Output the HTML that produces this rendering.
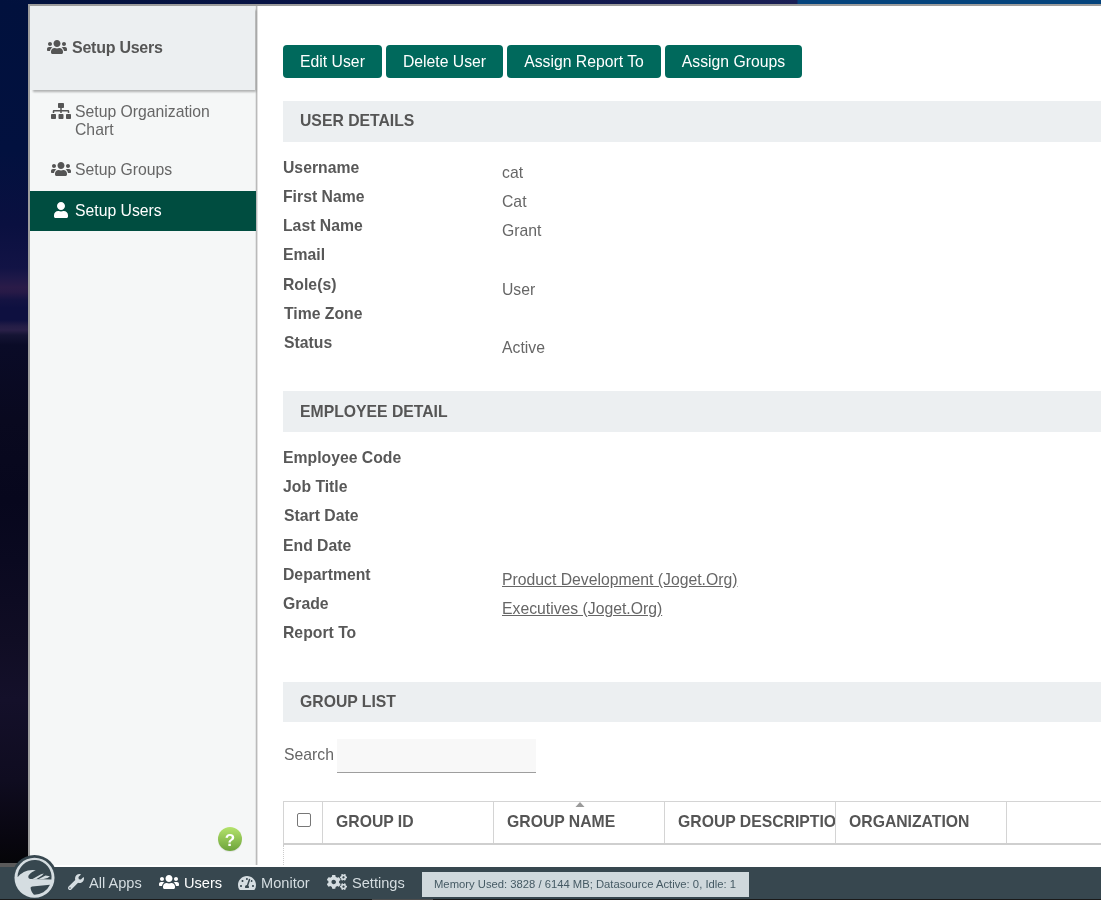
<!DOCTYPE html>
<html><head><meta charset="utf-8">
<style>
*{box-sizing:border-box;margin:0;padding:0}
html,body{width:1101px;height:900px;overflow:hidden}
body{position:relative;font-family:"Liberation Sans",sans-serif;background:#05050c;color:#555}
.abs{position:absolute;white-space:nowrap}
.abs,.btn,.th{will-change:transform}
#bgleft{left:0;top:0;width:28px;height:867px;background:linear-gradient(to bottom,#01113d 0px,#02113f 150px,#0a1040 225px,#121345 268px,#1e1848 278px,#2a1b48 287px,#281a47 292px,#141342 300px,#0e1040 308px,#0e1040 320px,#241d46 326px,#2a2048 330px,#151434 335px,#0a0b27 345px,#09091f 420px,#07071d 500px,#0a0920 560px,#100d24 640px,#14102a 700px,#0f0c20 780px,#08060f 840px,#050508 863px)}
#bggray{left:0;top:863px;width:28px;height:4px;background:#5a5a5a}
#topstrip{left:0;top:0;width:1101px;height:4px;background:linear-gradient(to right,#01113d 0,#0a1448 400px,#1a1f55 797px,#04437c 798px,#04437c 1101px)}
#win{left:28px;top:4px;width:1073px;height:863px;background:#fff;border-left:2px solid #9c9c9c;border-top:2px solid #9c9c9c}
#side{left:30px;top:6px;width:226px;height:859px;background:#f5f7f7}
#sideborder{left:255px;top:6px;width:3px;height:859px;background:linear-gradient(to right,#e4e6e6 1px,#bababa 1px,#bababa 2px,#e2e2e2 2px)}
#sidehead{left:30px;top:6px;width:225px;height:84px;background:#eceff1;box-shadow:2px 3px 2px -1px rgba(0,0,0,.28)}
.sh-title{left:72px;top:38.5px;font-size:16px;letter-spacing:-0.25px;font-weight:bold;color:#555}
.nav{left:75px;font-size:15.75px;color:#666;line-height:18px}
.ico{position:absolute;fill:#555}
.btn{position:absolute;top:45px;height:33px;background:#00695c;color:#fff;border-radius:4px;font-size:15.75px;line-height:33px;text-align:center}
.sechead{left:283px;width:818px;height:41px;background:#eceff1;font-size:15.75px;font-weight:bold;color:#555;padding-left:17px;line-height:41px}
.lbl{left:283px;font-size:15.75px;font-weight:bold;color:#585858;line-height:18px}
.val{left:502px;font-size:15.75px;color:#666;line-height:18px}
.val a{color:#666;text-decoration:underline}
#bar{left:0;top:867px;width:1101px;height:32px;background:#37474f}
#barline{left:0;top:899px;width:1101px;height:1px;background:linear-gradient(to right,#1a1a1a 372px,#4d4d4d 372px,#4d4d4d 433px,#1a1a1a 433px)}
.bi{top:875.5px;font-size:14.6px;color:#d5dde1;line-height:14px}
.bico{position:absolute;fill:#d5dde1}
#mem{left:422px;top:872px;width:327px;height:25px;background:#cfd8dc;color:#455a64;font-size:11.25px;line-height:25px;padding-left:12px}
.th{position:absolute;white-space:nowrap;top:801px;height:44px;border-top:1px solid #d4d4d4;border-right:1px solid #d4d4d4;border-bottom:2px solid #cfcfcf;font-size:15.75px;font-weight:bold;color:#555;line-height:39px;overflow:hidden;padding-left:14px}
</style></head><body>
<div id="bgleft" class="abs"></div>
<div id="bggray" class="abs"></div>
<div id="topstrip" class="abs"></div>
<div id="win" class="abs"></div>
<div id="side" class="abs"></div>
<div id="sideborder" class="abs"></div>
<div id="sidehead" class="abs"></div>
<svg class="ico" style="left:47px;top:39px" width="20" height="16" viewBox="0 0 640 512"><path d="M96 224c35.3 0 64-28.7 64-64s-28.7-64-64-64-64 28.7-64 64 28.7 64 64 64zm448 0c35.3 0 64-28.7 64-64s-28.7-64-64-64-64 28.7-64 64 28.7 64 64 64zm32 32h-64c-17.6 0-33.5 7.1-45.1 18.6 40.3 22.1 68.9 62 75.1 109.4h66c17.7 0 32-14.3 32-32v-32c0-35.3-28.7-64-64-64zm-256 0c61.9 0 112-50.1 112-112S381.9 32 320 32 208 82.1 208 144s50.1 112 112 112zm76.8 32h-8.3c-20.8 10-43.9 16-68.5 16s-47.6-6-68.5-16h-8.3C179.6 288 128 339.6 128 403.2V432c0 26.5 21.5 48 48 48h288c26.5 0 48-21.5 48-48v-28.8c0-63.6-51.6-115.2-115.2-115.2zm-223.7-13.4C161.5 263.1 145.6 256 128 256H64c-35.3 0-64 28.7-64 64v32c0 17.7 14.3 32 32 32h65.9c6.3-47.4 34.9-87.3 75.2-109.4z"/></svg>
<div class="abs sh-title">Setup Users</div>

<svg class="ico" style="left:51px;top:103px" width="20" height="16" viewBox="0 0 640 512"><path d="M128 352H32c-17.67 0-32 14.330-32 32v96c0 17.67 14.33 32 32 32h96c17.67 0 32-14.33 32-32v-96c0-17.67-14.33-32-32-32zm-24-80h192v48h48v-48h192v48h48v-57.59c0-21.17-17.23-38.41-38.41-38.41H344v-64h40c17.67 0 32-14.33 32-32V32c0-17.670-14.33-32-32-32H256c-17.67 0-32 14.33-32 32v96c0 17.67 14.33 32 32 32h40v64H94.41C73.23 224 56 241.23 56 262.41V320h48v-48zm264 80h-96c-17.67 0-32 14.33-32 32v96c0 17.67 14.33 32 32 32h96c17.67 0 32-14.33 32-32v-96c0-17.67-14.33-32-32-32zm240 0h-96c-17.67 0-32 14.33-32 32v96c0 17.67 14.33 32 32 32h96c17.67 0 32-14.33 32-32v-96c0-17.67-14.330-32-32-32z"/></svg>
<div class="abs nav" style="top:103px">Setup Organization<br>Chart</div>
<svg class="ico" style="left:51px;top:161px" width="20" height="16" viewBox="0 0 640 512"><path d="M96 224c35.3 0 64-28.7 64-64s-28.7-64-64-64-64 28.7-64 64 28.7 64 64 64zm448 0c35.3 0 64-28.7 64-64s-28.7-64-64-64-64 28.7-64 64 28.7 64 64 64zm32 32h-64c-17.6 0-33.5 7.1-45.1 18.6 40.3 22.1 68.9 62 75.1 109.4h66c17.7 0 32-14.3 32-32v-32c0-35.3-28.7-64-64-64zm-256 0c61.9 0 112-50.1 112-112S381.9 32 320 32 208 82.1 208 144s50.1 112 112 112zm76.8 32h-8.3c-20.8 10-43.9 16-68.5 16s-47.6-6-68.5-16h-8.3C179.6 288 128 339.6 128 403.2V432c0 26.5 21.5 48 48 48h288c26.5 0 48-21.5 48-48v-28.8c0-63.6-51.6-115.2-115.2-115.2zm-223.7-13.4C161.5 263.1 145.6 256 128 256H64c-35.3 0-64 28.7-64 64v32c0 17.7 14.3 32 32 32h65.9c6.3-47.4 34.9-87.3 75.2-109.4z"/></svg>
<div class="abs nav" style="top:161px">Setup Groups</div>
<div class="abs" style="left:30px;top:191px;width:226px;height:40px;background:#004d40"></div>
<svg class="ico" style="left:54px;top:202px;fill:#fff" width="14" height="16" viewBox="0 0 448 512"><path d="M224 256c70.7 0 128-57.3 128-128S294.7 0 224 0 96 57.3 96 128s57.3 128 128 128zm89.6 32h-16.7c-22.2 10.2-46.9 16-72.9 16s-50.6-5.800-72.9-16h-16.7C60.2 288 0 348.2 0 422.4V464c0 26.5 21.5 48 48 48h352c26.5 0 48-21.5 48-48v-41.6c0-74.2-60.2-134.4-134.4-134.4z"/></svg>
<div class="abs nav" style="top:202px;color:#fff">Setup Users</div>

<div class="abs" style="left:218px;top:827px;width:24px;height:24px;border-radius:50%;background:linear-gradient(to bottom,#b4e36c,#6da33c);box-shadow:0 1px 1px rgba(0,0,0,.08)"></div>
<div class="abs" style="left:218px;top:829px;width:24px;height:24px;text-align:center;font-size:17px;font-weight:bold;color:#fff;line-height:24px">?</div>

<div class="btn" style="left:283px;width:99px">Edit User</div>
<div class="btn" style="left:386px;width:117px">Delete User</div>
<div class="btn" style="left:507px;width:154px">Assign Report To</div>
<div class="btn" style="left:665px;width:137px">Assign Groups</div>

<div class="abs sechead" style="top:101px;line-height:39px">USER DETAILS</div>
<div class="abs lbl" style="top:159px">Username</div>
<div class="abs lbl" style="top:188px">First Name</div>
<div class="abs lbl" style="top:217px">Last Name</div>
<div class="abs lbl" style="top:246px">Email</div>
<div class="abs lbl" style="top:276px">Role(s)</div>
<div class="abs lbl" style="top:305px;left:284px">Time Zone</div>
<div class="abs lbl" style="top:334px;left:284px">Status</div>
<div class="abs val" style="top:164px">cat</div>
<div class="abs val" style="top:193px">Cat</div>
<div class="abs val" style="top:222px">Grant</div>
<div class="abs val" style="top:281px">User</div>
<div class="abs val" style="top:339px">Active</div>

<div class="abs sechead" style="top:391px">EMPLOYEE DETAIL</div>
<div class="abs lbl" style="top:449px">Employee Code</div>
<div class="abs lbl" style="top:478px">Job Title</div>
<div class="abs lbl" style="top:507px;left:284px">Start Date</div>
<div class="abs lbl" style="top:537px">End Date</div>
<div class="abs lbl" style="top:566px">Department</div>
<div class="abs lbl" style="top:595px">Grade</div>
<div class="abs lbl" style="top:624px">Report To</div>
<div class="abs val" style="top:571px"><a>Product Development (Joget.Org)</a></div>
<div class="abs val" style="top:600px"><a>Executives (Joget.Org)</a></div>

<div class="abs sechead" style="top:682px;height:40px;line-height:40px">GROUP LIST</div>
<div class="abs" style="left:284px;top:746px;font-size:15.75px;color:#666;line-height:18px">Search</div>
<div class="abs" style="left:337px;top:739px;width:199px;height:34px;background:#f8f8f8;border-bottom:1px solid #9e9e9e"></div>

<div class="th" style="left:283px;width:40px;border-left:1px solid #d4d4d4"></div>
<div class="abs" style="left:297px;top:813px;width:14px;height:14px;border:1px solid #777;border-radius:2px;background:#fff"></div>
<div class="th" style="left:322px;width:172px">GROUP ID</div>
<div class="th" style="left:493px;width:172px">GROUP NAME</div>
<svg class="abs" style="left:575px;top:802px" width="10" height="6" viewBox="0 0 10 6"><path d="M5 0L9.5 5H0.5Z" fill="#9a9a9a"/></svg>
<div class="th" style="left:664px;width:172px;padding-right:0">GROUP DESCRIPTION</div>
<div class="th" style="left:835px;width:172px">ORGANIZATION</div>
<div class="th" style="left:1006px;width:100px;border-right:none"></div>
<div class="abs" style="left:283px;top:845px;width:1px;height:20px;border-left:1px dotted #ccc"></div>

<div id="bar" class="abs"></div>
<div id="barline" class="abs"></div>
<div class="abs" style="left:12px;top:855px;width:45px;height:44px;border-radius:50%/50% 50% 45% 45%;background:#37474f;overflow:hidden"></div>
<svg class="abs" style="left:14px;top:857px" width="41" height="42" viewBox="0 0 41 42">
<circle cx="20.5" cy="20.8" r="20" fill="#d5dde1"/>
<path d="M3.6 20.2 C7 16 12 13.2 18.5 13 L21.8 13.3 C18.5 14.5 14.8 17 14.3 19.6 C14.1 21.2 15.2 21.9 16.4 21.9 L37.4 22.6 A17 17 0 1 0 3.6 20.2 Z" fill="#37474f"/>
<path d="M16.6 30.6 Q16.8 29.6 18.2 29.4 L36 27.8 A17 17 0 0 1 19.7 37.6 C17.8 35.3 16.4 32.6 16.6 30.6Z" fill="#37474f"/>
<path d="M18.5 22 L27 17.2 L29.8 16.6 L28 18.6 L22.5 22 Z M24.8 22 L31.5 18.6 L36 19.3 L33.5 21 L29.5 22 Z" fill="#d5dde1"/>
</svg>
<svg class="bico" style="left:68px;top:874px" width="16" height="16" viewBox="0 0 512 512"><path d="M507.73 109.1c-2.24-9.03-13.54-12.09-20.12-5.51l-74.36 74.36-67.88-11.31-11.310-67.88 74.36-74.36c6.62-6.62 3.43-17.9-5.66-20.16-47.38-11.74-99.55.91-136.58 37.93-39.64 39.64-50.55 97.1-34.05 147.2L18.74 402.76c-24.99 24.99-24.99 65.51 0 90.5 24.99 24.99 65.51 24.99 90.5 0l213.21-213.21c50.12 16.71 107.47 5.68 147.37-34.22 37.07-37.07 49.7-89.32 37.91-136.73zM64 472c-13.25 0-24-10.75-24-24 0-13.26 10.75-24 24-24s24 10.74 24 24c0 13.25-10.75 24-24 24z"/></svg>
<div class="abs bi" style="left:89px">All Apps</div>
<svg class="bico" style="left:159px;top:874px;fill:#fff" width="20" height="16" viewBox="0 0 640 512"><path d="M96 224c35.3 0 64-28.7 64-64s-28.7-64-64-64-64 28.7-64 64 28.7 64 64 64zm448 0c35.3 0 64-28.7 64-64s-28.7-64-64-64-64 28.7-64 64 28.7 64 64 64zm32 32h-64c-17.6 0-33.5 7.1-45.1 18.6 40.3 22.1 68.9 62 75.1 109.4h66c17.7 0 32-14.3 32-32v-32c0-35.3-28.7-64-64-64zm-256 0c61.9 0 112-50.1 112-112S381.9 32 320 32 208 82.1 208 144s50.1 112 112 112zm76.8 32h-8.3c-20.8 10-43.9 16-68.5 16s-47.6-6-68.5-16h-8.3C179.6 288 128 339.6 128 403.2V432c0 26.5 21.5 48 48 48h288c26.5 0 48-21.5 48-48v-28.8c0-63.6-51.6-115.2-115.2-115.2zm-223.7-13.4C161.5 263.1 145.6 256 128 256H64c-35.3 0-64 28.7-64 64v32c0 17.7 14.3 32 32 32h65.9c6.3-47.4 34.9-87.3 75.2-109.4z"/></svg>
<div class="abs bi" style="left:184px;color:#fff">Users</div>
<svg class="bico" style="left:238px;top:875px" width="18" height="16" viewBox="0 0 576 512"><path d="M288 32C128.94 32 0 160.94 0 320c0 52.8 14.25 102.26 39.06 144.8 5.61 9.62 16.3 15.2 27.44 15.2h443c11.14 0 21.830-5.58 27.44-15.2C561.75 422.26 576 372.8 576 320c0-159.06-128.94-288-288-288zm0 64c14.71 0 26.58 10.13 30.32 23.65-1.11 2.26-2.64 4.23-3.45 6.67l-9.22 27.67c-5.13 3.49-10.97 6.01-17.64 6.01-17.67 0-32-14.33-32-32S270.33 96 288 96zM96 384c-17.67 0-32-14.33-32-32s14.33-32 32-32 32 14.33 32 32-14.33 32-32 32zm48-160c-17.67 0-32-14.33-32-32s14.33-32 32-32 32 14.33 32 32-14.33 32-32 32zm246.77-72.41l-61.33 184C343.13 347.33 352 364.54 352 384c0 11.72-3.38 22.55-8.88 32H232.88c-5.5-9.45-8.88-20.28-8.88-32 0-33.94 26.5-61.43 59.9-63.59l61.34-184.01c4.17-12.56 17.73-19.45 30.36-15.17 12.57 4.19 19.35 17.79 15.17 30.360zm14.66 57.2l15.52-46.55c3.47-1.29 7.13-2.23 11.05-2.23 17.67 0 32 14.33 32 32s-14.33 32-32 32c-11.38 0-20.89-6.27-26.57-15.220zM480 384c-17.67 0-32-14.33-32-32s14.33-32 32-32 32 14.33 32 32-14.33 32-32 32z"/></svg>
<div class="abs bi" style="left:261px">Monitor</div>
<svg class="bico" style="left:327px;top:874px" width="20" height="16" viewBox="0 0 640 512"><path d="M512.1 191l-8.2 14.3c-3 5.3-9.4 7.5-15.1 5.4-11.8-4.4-22.6-10.7-32.1-18.6-4.6-3.8-5.8-10.5-2.8-15.7l8.2-14.3c-6.9-8-12.3-17.3-15.9-27.4h-16.5c-6 0-11.2-4.3-12.2-10.3-2-12-2.1-24.6 0-37.1 1-6 6.2-10.4 12.2-10.4h16.5c3.6-10.1 9-19.4 15.9-27.4l-8.2-14.3c-3-5.2-1.9-11.9 2.8-15.7 9.5-7.9 20.4-14.2 32.1-18.6 5.7-2.1 12.1.1 15.1 5.4l8.2 14.3c10.5-1.9 21.2-1.9 31.7 0L552 6.3c3-5.3 9.4-7.5 15.1-5.4 11.8 4.4 22.6 10.7 32.1 18.6 4.6 3.8 5.8 10.5 2.8 15.7l-8.2 14.3c6.9 8 12.3 17.3 15.9 27.4h16.5c6 0 11.2 4.3 12.2 10.3 2 12 2.1 24.6 0 37.1-1 6-6.2 10.4-12.2 10.4h-16.5c-3.6 10.1-9 19.4-15.9 27.4l8.2 14.3c3 5.2 1.9 11.9-2.8 15.7-9.5 7.9-20.4 14.2-32.1 18.6-5.7 2.1-12.1-.1-15.1-5.4l-8.2-14.3c-10.4 1.9-21.2 1.9-31.7 0zm-10.5-58.8c38.5 29.6 82.4-14.3 52.8-52.8-38.5-29.7-82.4 14.3-52.8 52.8zM386.3 286.1l33.7 16.8c10.1 5.8 14.5 18.1 10.5 29.1-8.9 24.2-26.4 46.4-42.6 65.8-7.4 8.9-20.2 11.1-30.3 5.3l-29.1-16.8c-16 13.7-34.6 24.6-54.9 31.7v33.6c0 11.6-8.3 21.6-19.7 23.6-24.6 4.2-50.4 4.4-75.9 0-11.5-2-20-11.9-20-23.6V418c-20.3-7.2-38.9-18-54.9-31.7L74 403c-10 5.8-22.9 3.6-30.3-5.3-16.2-19.4-33.3-41.6-42.2-65.7-4-10.9.4-23.2 10.5-29.1l33.3-16.8c-3.9-20.9-3.9-42.4 0-63.4L12 205.8c-10.1-5.8-14.6-18.1-10.5-29 8.9-24.2 26-46.4 42.2-65.8 7.4-8.9 20.2-11.1 30.3-5.3l29.1 16.8c16-13.7 34.6-24.6 54.9-31.7V57.1c0-11.5 8.2-21.5 19.6-23.5 24.6-4.2 50.5-4.4 76-.1 11.5 2 20 11.9 20 23.6v33.6c20.3 7.2 38.9 18 54.9 31.7l29.1-16.8c10-5.8 22.9-3.6 30.3 5.3 16.2 19.4 33.2 41.6 42.1 65.8 4 10.9.1 23.2-10 29.1l-33.7 16.8c3.9 21 3.9 42.5 0 63.5zm-117.6 21.1c59.2-77-28.7-164.9-105.7-105.7-59.2 77 28.7 164.9 105.7 105.7zm243.4 182.7l-8.2 14.3c-3 5.3-9.4 7.5-15.1 5.4-11.8-4.4-22.6-10.7-32.1-18.6-4.6-3.8-5.8-10.5-2.8-15.7l8.2-14.3c-6.9-8-12.3-17.3-15.9-27.4h-16.5c-6 0-11.2-4.3-12.2-10.3-2-12-2.1-24.6 0-37.1 1-6 6.2-10.4 12.2-10.4h16.5c3.6-10.1 9-19.4 15.9-27.4l-8.2-14.3c-3-5.2-1.9-11.9 2.8-15.7 9.5-7.900 20.4-14.2 32.1-18.6 5.7-2.1 12.1.1 15.1 5.4l8.2 14.3c10.5-1.9 21.2-1.9 31.7 0l8.2-14.3c3-5.3 9.4-7.5 15.1-5.4 11.8 4.4 22.6 10.7 32.1 18.6 4.6 3.8 5.8 10.5 2.8 15.7l-8.2 14.3c6.9 8 12.3 17.3 15.9 27.4h16.5c6 0 11.2 4.3 12.2 10.3 2 12 2.1 24.6 0 37.1-1 6-6.2 10.4-12.2 10.4h-16.5c-3.6 10.1-9 19.4-15.9 27.4l8.2 14.3c3 5.2 1.9 11.9-2.8 15.7-9.5 7.9-20.4 14.2-32.1 18.6-5.7 2.1-12.1-.1-15.1-5.4l-8.2-14.3c-10.4 1.9-21.2 1.9-31.7 0zM501.6 431c38.5 29.6 82.4-14.3 52.8-52.8-38.5-29.6-82.4 14.3-52.8 52.8z"/></svg>
<div class="abs bi" style="left:352px">Settings</div>
<div id="mem" class="abs">Memory Used: 3828 / 6144 MB; Datasource Active: 0, Idle: 1</div>
</body></html>
